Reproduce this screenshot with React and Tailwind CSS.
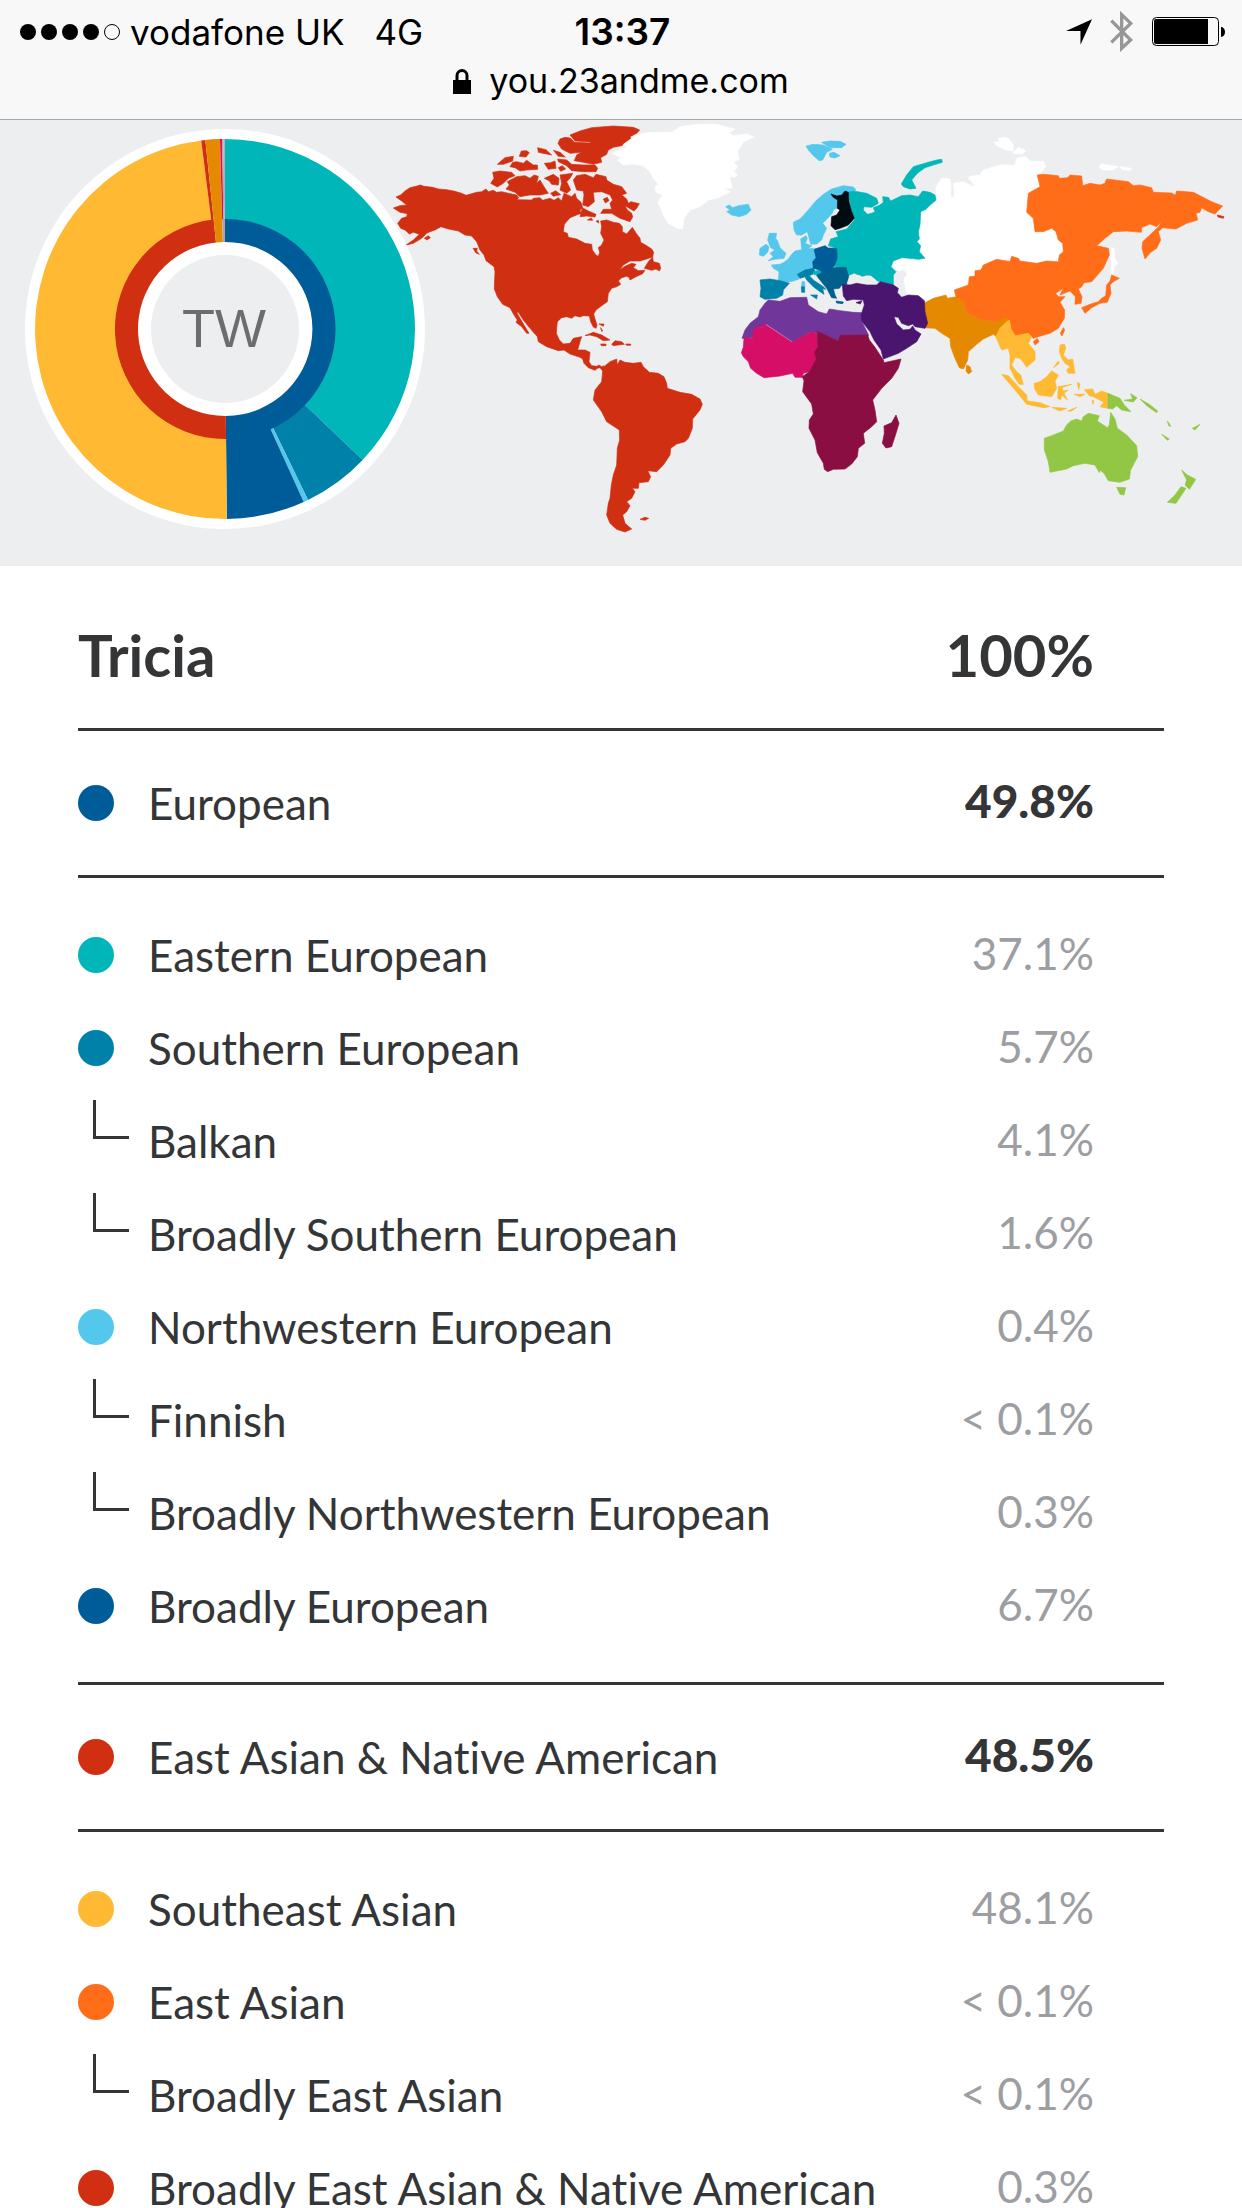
import { Fragment } from 'react';

const COLORS = {
  navy: '#005b99',
  teal: '#00b6b8',
  cerulean: '#0081a9',
  sky: '#54c7ec',
  balkan: '#005f8c',
  red: '#d12f12',
  yellow: '#ffb932',
  orange: '#ff6d19',
  amber: '#e58a00',
  green: '#91c745',
  purple: '#71369a',
  indigo: '#4a156f',
  magenta: '#d70e68',
  maroon: '#8b0e42',
};

const GROUPS = [
  {
    name: 'European',
    value: '49.8%',
    dot: 'bg-[#005b99]',
    rows: [
      { name: 'Eastern European', value: '37.1%', dot: 'bg-[#00b6b8]' },
      { name: 'Southern European', value: '5.7%', dot: 'bg-[#0081a9]' },
      { name: 'Balkan', value: '4.1%' },
      { name: 'Broadly Southern European', value: '1.6%' },
      { name: 'Northwestern European', value: '0.4%', dot: 'bg-[#54c7ec]' },
      { name: 'Finnish', value: '< 0.1%' },
      { name: 'Broadly Northwestern European', value: '0.3%' },
      { name: 'Broadly European', value: '6.7%', dot: 'bg-[#005b99]' },
    ],
  },
  {
    name: 'East Asian & Native American',
    value: '48.5%',
    dot: 'bg-[#d12f12]',
    rows: [
      { name: 'Southeast Asian', value: '48.1%', dot: 'bg-[#ffb932]' },
      { name: 'East Asian', value: '< 0.1%', dot: 'bg-[#ff6d19]' },
      { name: 'Broadly East Asian', value: '< 0.1%' },
      { name: 'Broadly East Asian & Native American', value: '0.3%', dot: 'bg-[#d12f12]' },
    ],
  },
];

// [from, to] in percent of the full turn, clockwise from the top
const OUTER_SLICES = [
  { from: 0, to: 37.1, color: COLORS.teal },
  { from: 37.1, to: 42.8, color: COLORS.cerulean },
  { from: 42.8, to: 43.2, color: COLORS.sky },
  { from: 43.2, to: 49.85, color: COLORS.navy },
  { from: 49.85, to: 98, color: COLORS.yellow },
  { from: 98, to: 98.35, color: COLORS.red },
  { from: 98.35, to: 99.58, color: COLORS.amber },
  { from: 99.58, to: 99.76, color: COLORS.magenta },
  { from: 99.76, to: 99.88, color: '#b9a38c' },
  { from: 99.88, to: 100, color: '#b7a9c4' },
];

const INNER_SLICES = [
  { from: 0, to: 49.85, color: COLORS.navy },
  { from: 49.85, to: 98.35, color: COLORS.red },
  { from: 98.35, to: 99.6, color: COLORS.amber },
  { from: 99.6, to: 100, color: '#b7a0a4' },
];

// Land shapes, grouped by the corner they are measured from
const LAND = [
  {
    at: 'translate(1140 345)',
    shapes: [
      {
        color: COLORS.red,
        d: [
          'M48 246L62 240 75 228 90 218 108 214 121 210 132 214 158 217 175 222 200 224 225 229 245 235 258 241 275 236 290 232 305 230 318 222 325 230 340 226 350 232 365 230 385 235 410 240 416 247 412 254 455 255 460 250 480 248 488 256 510 250 522 256 535 248 545 258 552 235 575 245 585 235 590 250 603 262 608 278 600 285 603 295 590 300 570 308 553 328 550 350 562 355 565 367 590 372 615 385 635 388 637 405 648 420 655 424 659 412 655 398 665 390 672 375 662 355 665 335 662 318 680 315 700 322 718 325 727 335 727 350 740 357 757 337 770 357 780 370 782 382 800 392 815 402 821 412 818 425 800 432 780 438 750 438 730 450 718 465 735 454 755 445 768 448 760 458 775 467 795 466 788 476 768 485 750 495 747 487 740 484 725 488 715 498 722 508 710 515 695 520 685 535 682 560 665 572 648 585 641 597 645 612 651 630 648 640 640 636 632 620 628 603 610 602 600 606 585 602 575 610 560 605 545 608 532 620 530 640 529 655 538 675 550 687 570 685 580 670 605 665 600 680 593 705 615 705 630 712 627 740 635 752 650 754 657 750 665 755 672 752 668 768 660 758 652 760 645 766 625 758 612 745 608 732 600 727 570 717 552 705 535 707 500 695 475 680 472 665 450 640 430 615 415 592 410 592 420 610 432 630 447 655 440 655 425 635 408 622 412 615 402 600 390 578 368 568 352 545 343 522 344 490 345 470 342 455 318 437 312 420 300 405 290 380 275 363 255 360 235 348 205 342 183 335 165 345 150 350 140 355 125 370 100 385 78 390 100 375 118 358 100 352 88 357 75 345 62 340 53 325 65 310 80 305 82 296 60 292 40 279 60 272 80 270 65 258Z',
          'M793 460L805 440 818 425 820 440 838 445 842 460 838 468 828 462 815 466Z',
          'M279 400L292 400 290 408 298 418 288 414ZM325 432L342 440 356 455 350 455Z',
          'M570 60L600 48 635 38 700 33 760 37 779 45 770 55 750 65 752 70 725 92 700 97 685 105 680 118 662 128 665 142 640 148 610 142 583 137 590 120 605 112 570 115 545 102 534 85 540 72 555 67 570 69 584 82 630 84 632 81 585 78Z',
          'M533 132L560 135 575 148 610 150 645 150 653 160 648 170 610 170 575 167 560 152 535 140Z',
          'M338 172L360 168 395 172 405 182 385 190 370 205 352 216 332 205 342 190Z',
          'M382 200L410 185 435 182 450 190 462 180 475 184 470 205 480 195 492 215 505 235 480 240 450 240 420 245 405 232 378 222 388 210Z',
          'M352 148L375 128 400 124 398 138 370 148Z',
          'M390 155L398 142 410 140 430 145 440 136 460 150 472 150 473 163 440 165 420 168 405 158Z',
          'M418 124L424 108 440 107 448 113 438 126ZM473 98L498 104 515 120 495 116 475 112ZM520 106L540 112 556 126 535 124ZM493 145L512 143 525 138 528 160 505 163ZM535 158L547 152 557 162 542 169Z',
          'M493 190L520 178 537 190 535 210 515 208 508 198ZM540 180L578 175 570 190 560 200 572 225 560 235 540 225 545 205ZM512 235L527 227 542 239 520 244Z',
          'M580 195L590 182 615 178 640 188 648 178 678 185 680 195 700 208 725 215 740 235 725 240 740 252 745 265 753 260 778 266 770 280 762 288 735 272 742 285 755 295 758 306 750 320 720 310 695 295 662 295 670 283 695 283 690 265 698 255 690 240 665 230 640 232 643 260 625 275 608 270 612 240 610 228 590 225Z',
          'M670 252L682 247 687 257 676 264ZM607 278L625 288 648 298 645 306 620 303 600 305ZM622 315L634 309 638 316ZM648 319L655 316 656 324Z',
          'M615 662L640 652 665 660 690 675 670 677 650 665 630 660ZM695 688L705 677 725 680 733 688 715 690 700 692ZM662 687H678V692H664ZM737 687H752V691H740ZM657 627L672 627 670 634ZM662 638L668 648 665 649Z',
          'M133 370L145 362 151 368 141 375Z',
          'M668 768L672 755 690 740 710 732 712 750 720 735 735 742 760 745 783 742 790 755 808 772 835 775 852 785 860 805 862 820 900 832 935 838 960 852 967 868 960 885 938 912 937 940 925 970 915 980 890 987 872 1000 870 1020 850 1050 830 1070 803 1067 812 1085 805 1100 777 1103 775 1120 757 1120 765 1130 755 1150 740 1160 750 1172 740 1190 728 1200 735 1225 755 1242 735 1251 710 1243 690 1225 680 1200 685 1165 690 1150 694 1110 700 1080 710 1050 712 1000 719 975 718 945 680 920 665 890 640 855 645 825 665 800Z',
          'M780 1213L795 1207 806 1210 795 1216Z',
        ].join(''),
      },
    ],
  },
  {
    at: 'translate(1800 345)',
    shapes: [
      {
        color: '#ffffff',
        d: 'M36 115L60 105 80 97 70 88 90 75 110 60 140 53 185 52 215 52 240 35 290 28 350 28 405 43 385 52 400 62 440 57 463 66 430 80 412 110 418 133 400 140 412 155 402 170 411 178 408 186 388 185 397 218 370 222 392 230 350 250 325 255 300 275 270 285 252 310 247 342 228 338 205 325 190 300 180 275 173 262 188 240 168 232 165 215 175 208 160 190 150 170 130 152 100 147 70 150 52 135 65 128Z',
      },
      {
        color: COLORS.sky,
        d: 'M377 275L388 270 398 278 415 272 430 270 445 268 449 278 453 285 440 298 418 305 395 300 380 290 390 285Z',
      },
    ],
  },
  {
    at: 'translate(2700 345)',
    shapes: [
      {
        color: '#ffffff',
        d: [
          'M-27 445L0 428 30 432 50 425 58 410 60 392 50 370 55 330 58 290 90 275 108 262 108 215 125 190 150 192 153 215 152 245 160 250 163 232 160 205 190 200 220 215 222 208 205 190 210 184 240 180 250 165 300 150 345 150 350 130 375 124 390 138 430 140 437 155 425 170 405 185 430 215 390 235 385 290 410 350 455 335 495 390 490 415 475 445 410 450 335 430 290 440 245 470 210 500 165 535 175 550 142 552 138 542 100 550 75 562 45 542 20 545 15 510 5 495 0 480 12 468 -15 465 -25 460Z',
          'M283 82L298 80 295 70 310 67 326 70 340 90 340 108 318 105 290 92ZM338 115L355 97 378 108 365 117ZM598 155L604 146 655 155 640 165 605 165ZM660 155L695 160 690 167 665 163ZM125 262L155 252 158 262 140 269Z',
          'M635 398L642 400 645 430 653 445 642 455 640 475 632 475 635 440 630 415Z',
        ].join(''),
      },
      {
        color: COLORS.amber,
        d: 'M72 565L100 550 138 540 142 550 170 545 192 560 200 590 240 612 290 620 318 606 332 612 300 640 290 665 280 658 250 672 230 688 205 710 203 735 190 762 178 758 165 730 152 695 150 670 125 655 105 640 72 638 80 620 70 600ZM200 750L210 755 215 770 205 777 198 768Z',
      },
      {
        color: COLORS.orange,
        d: [
          'M412 180L430 178 475 182 478 190 503 188 510 180 545 183 548 212 570 205 600 210 615 205 620 192 685 200 700 212 720 210 755 218 760 232 815 234 826 241 830 228 880 232 935 260 968 273 945 297 925 290 905 278 900 292 888 295 893 315 860 325 828 342 788 338 775 350 782 375 770 400 752 412 735 432 726 400 728 380 760 350 776 335 785 318 770 335 750 327 725 338 724 352 680 348 640 350 615 370 590 392 625 400 628 420 610 460 575 500 552 503 545 515 535 522 546 545 543 565 525 568 526 545 510 528 480 540 490 520 467 535 475 545 495 545 480 562 494 585 493 610 475 640 450 655 415 665 400 670 385 655 345 663 330 640 328 615 318 606 290 620 240 612 200 590 192 560 168 545 163 525 205 510 208 485 225 483 225 467 243 465 250 450 290 433 330 440 335 424 355 430 360 438 410 445 440 438 475 440 478 420 490 410 488 385 475 375 468 350 455 340 430 350 405 350 400 310 380 292 385 235 420 215Z',
          'M481 655L490 638 494 645 486 663ZM400 680L412 670 417 680 405 690Z',
          'M545 578L570 568 595 560 605 550 617 542 620 510 630 498 635 480 658 490 640 500 630 510 633 535 622 562 600 565 575 578 555 595Z',
        ].join(''),
      },
      { color: COLORS.red, d: 'M952 300L972 305 970 310 954 306Z' },
      {
        color: COLORS.yellow,
        d: [
          'M287 665L300 640 318 622 328 615 333 640 345 662 385 655 395 665 385 685 405 710 405 735 380 757 372 745 360 730 345 728 335 750 350 770 362 780 370 808 358 808 345 790 330 760 330 720 325 700 305 705Z',
          'M305 778L325 782 355 815 380 840 382 858 420 863 450 875 430 878 380 868 345 825ZM455 877L500 880 480 888ZM503 888L530 877 515 888Z',
          'M403 805L420 800 440 785 455 768 475 780 465 800 470 820 455 845 415 840 403 820Z',
          'M475 815L515 808 485 818 490 828 505 825 492 835 502 855 485 840 482 855 473 850Z',
          'M480 690L493 687 497 700 490 720 505 735 518 732 525 775 505 775 500 765 510 755 495 745 485 730 478 710ZM460 758L475 738 478 745ZM532 802L540 807 536 824ZM522 838L555 838 540 845Z',
          'M553 824L578 822 585 838 605 828 624 835 624 880 600 875 612 862 580 845 568 842ZM576 855L582 858 579 868Z',
        ].join(''),
      },
      {
        color: COLORS.green,
        d: [
          'M624 835L660 850 673 870 693 890 665 885 650 872 638 882 624 880ZM672 856L698 852 692 836 711 848 700 861ZM720 852L748 868 773 888 770 893 740 872ZM802 918L813 934 806 932ZM785 958L808 972 802 976ZM877 940L900 928 885 945Z',
          'M433 970L455 962 490 948 500 930 512 918 530 912 545 918 550 905 565 895 598 902 592 918 622 938 628 930 632 892 645 912 652 940 680 960 710 992 713 1025 692 1065 688 1092 660 1102 625 1097 612 1075 600 1065 598 1073 585 1050 555 1045 520 1052 500 1062 450 1072 445 1040 433 1005Z',
          'M650 1117L677 1118 672 1140 660 1138Z',
          'M845 1065L862 1080 887 1093 878 1108 868 1123 855 1110 860 1095ZM843 1115L858 1120 828 1165 802 1162 825 1140Z',
        ].join(''),
      },
    ],
  },
  {
    at: 'translate(2040 345)',
    shapes: [
      {
        color: COLORS.sky,
        d: [
          'M378 93L400 88 430 90 457 103 440 112 428 135 418 137 400 122 385 105ZM425 82L450 78 480 79 498 88 485 98 450 98ZM448 115L462 112 480 122 465 129 450 126Z',
          'M340 322L360 312 385 285 405 260 430 238 455 222 490 212 520 216 528 225 510 232 500 230 488 235 475 243 472 255 475 277 460 285 457 295 435 318 428 325 440 340 430 360 425 375 410 387 392 388 388 372 382 350 365 360 350 360 342 345Z',
          'M362 372L378 362 382 370 376 385 395 393 385 400 378 405 365 402Z',
          'M268 355L290 355 287 370 293 378 300 398 318 415 312 430 285 433 265 437 280 425 270 415 285 405 272 398 263 375ZM240 400L258 388 267 395 263 412 250 424 238 420Z',
          'M274 450L300 448 312 442 325 432 335 418 345 408 370 403 400 400 408 428 398 440 402 462 380 468 355 475 358 492 340 498 315 503 295 497 297 470 280 460ZM366 500H374V514H365Z',
        ].join(''),
      },
      {
        color: COLORS.teal,
        d: [
          'M505 232L520 228 560 235 590 250 595 265 575 277 552 275 550 285 562 298 575 295 585 290 580 278 600 270 610 262 608 245 625 247 632 258 665 242 690 240 715 245 728 228 750 232 765 240 768 255 750 270 738 283 722 290 720 330 715 350 718 372 711 380 722 392 718 410 735 430 715 433 690 430 665 428 640 438 633 455 648 470 640 480 640 500 640 515 615 505 590 497 570 480 550 487 540 480 515 478 503 482 498 457 470 460 462 450 472 430 470 400 445 392 452 372 475 365 468 350 500 342 525 312 515 290Z',
          'M550 475L568 469 568 477 553 483Z',
          'M664 207L680 180 700 155 740 143 770 135 785 133 787 142 760 150 735 158 712 175 695 195 708 220 690 222 670 215Z',
        ].join(''),
      },
      {
        color: COLORS.cerulean,
        d: 'M240 495L270 492 300 497 328 505 310 525 308 540 290 550 255 553 240 545 243 520ZM352 478L375 465 400 460 405 468 398 478 388 482 400 495 430 515 437 523 428 521 432 538 420 530 400 515 380 495 375 485 360 490ZM392 540L412 540 410 552ZM364 515H374V532H365Z',
      },
      {
        color: COLORS.balkan,
        d: 'M412 474L425 462 450 462 460 458 498 457 503 475 508 490 500 508 485 510 478 520 460 522 465 540 470 550 455 548 440 520 420 495 410 482ZM468 558L490 561 488 566 470 564Z',
      },
      { color: COLORS.teal, d: 'M400 470L422 464 422 474 402 480Z' },
      {
        color: COLORS.navy,
        d: 'M402 403L435 392 445 399 470 400 472 430 462 455 450 465 425 467 400 460 398 440 408 428Z',
      },
      {
        color: '#020a12',
        d: 'M453 237L470 243 485 240 495 228 505 232 507 260 515 290 523 310 505 330 480 340 465 344 453 332 455 305 470 300 480 285 472 280 473 255 460 247Z',
      },
      // Caspian and Black Sea
      { color: '#edeef0', d: 'M508 485L522 476 545 487 560 482 575 485 590 498 593 508 575 512 545 505 510 512 502 505ZM652 472L672 465 680 480 670 490 672 510 682 545 660 548 655 520 645 510 652 495Z' },
    ],
  },
  {
    at: 'translate(2040 780)',
    shapes: [
      {
        color: COLORS.purple,
        d: 'M186 235L195 210 210 190 235 170 240 150 255 130 265 120 300 124 330 113 380 112 385 135 415 155 440 162 448 147 480 152 520 157 545 158 545 183 566 226 480 227 475 243 430 222 390 217 340 247 258 192 248 200 228 205 218 233Z',
      },
      {
        color: COLORS.magenta,
        d: 'M192 233L218 235 220 212 230 200 248 202 250 190 336 247 395 215 412 222 413 262 403 275 408 298 388 335 370 340 367 352 345 352 338 340 300 348 252 353 230 340 212 325 205 305 190 290 184 278 190 262Z',
      },
      {
        color: COLORS.maroon,
        d: 'M412 215L430 222 475 243 480 226 563 225 568 240 585 262 600 285 610 300 612 308 663 297 655 325 635 355 605 385 578 420 585 450 590 485 575 500 550 520 554 550 535 565 532 590 515 612 495 627 460 628 443 635 433 628 430 610 412 578 405 540 387 505 388 480 400 462 395 432 368 395 372 362 367 350 388 335 408 298 403 275 413 262ZM648 465L657 490 648 520 635 560 618 564 607 550 613 520 612 498 635 488Z',
      },
      {
        color: COLORS.indigo,
        d: 'M487 73L510 75 530 70 560 75 590 75 600 65 640 75 655 85 652 98 665 112 685 105 715 107 733 122 735 155 743 190 735 205 705 200 698 192 685 197 665 190 655 172 642 170 650 192 670 210 690 208 698 198 705 210 723 222 710 245 680 265 655 280 610 297 603 270 582 240 570 215 545 183 543 165 553 135 550 120 520 118 500 122 490 108ZM528 128L546 122 541 132Z',
      },
    ],
  },
];

function slicePath({ from, to }, outer, inner) {
  const point = (pct, r) => {
    const a = (pct / 100) * Math.PI * 2;
    return `${(Math.sin(a) * r).toFixed(2)} ${(-Math.cos(a) * r).toFixed(2)}`;
  };
  const large = to - from > 50 ? 1 : 0;
  return `M${point(from, outer)}A${outer} ${outer} 0 ${large} 1 ${point(to, outer)}L${point(to, inner)}A${inner} ${inner} 0 ${large} 0 ${point(from, inner)}Z`;
}

function StatusBar() {
  return (
    <header className="border-b border-[#a5a6a9] bg-[#f8f8f8] pb-5 font-['Inter',sans-serif] text-[34px] leading-[36px] text-black">
      <div className="grid h-[63px] grid-cols-[1fr_auto_1fr] items-center pr-[17px] pl-5">
        <div className="flex items-center text-[35px]">
          <div className="mr-2.5 flex gap-[5px]">
            <span className="size-4 rounded-full bg-black" />
            <span className="size-4 rounded-full bg-black" />
            <span className="size-4 rounded-full bg-black" />
            <span className="size-4 rounded-full bg-black" />
            <span className="size-4 rounded-full border border-black" />
          </div>
          <span>vodafone UK</span>
          <span className="ml-[30px]">4G</span>
        </div>
        <span className="text-[37px] font-semibold">13:37</span>
        <div className="flex items-center justify-end">
          <svg className="h-[26px] w-[26px]" viewBox="0 0 79 78" aria-hidden="true">
            <path d="M79 0L44 78V36H0Z" />
          </svg>
          <svg className="ml-[18px] h-[41px] w-[23px]" viewBox="0 0 69 123" fill="none" stroke="#979797" strokeWidth="10" aria-hidden="true">
            <path d="M4 29L62 87 35 112V11L62 37 4 94" />
          </svg>
          <svg className="ml-[19px] h-[29px] w-[73px]" viewBox="0 0 73 29" aria-hidden="true">
            <rect x="0.5" y="0.5" width="66" height="28" rx="4" fill="none" stroke="#000" />
            <path d="M4 2H56V27H4a2 2 0 0 1-2-2V4a2 2 0 0 1 2-2Z" />
            <path d="M69 10a4 5 0 0 1 0 10Z" />
          </svg>
        </div>
      </div>
      <div className="flex h-9 items-center justify-center">
        <svg className="mr-[18px] h-[25px] w-[18px]" viewBox="0 0 18 25" aria-hidden="true">
          <path d="M0 11H18V25H0Z" />
          <path d="M4 12V6.500a5 5 0 0 1 10 0V12" fill="none" stroke="#000" strokeWidth="3" />
        </svg>
        <span>you.23andme.com</span>
      </div>
    </header>
  );
}

function Donut() {
  return (
    <svg className="relative z-10 w-[400px] shrink-0" viewBox="-200 -200 400 400" role="img" aria-label="Ancestry composition">
      <circle r="200" fill="#fff" />
      {OUTER_SLICES.map((s) => (
        <path key={s.from} d={slicePath(s, 190, 109)} fill={s.color} />
      ))}
      {INNER_SLICES.map((s) => (
        <path key={s.from} d={slicePath(s, 110, 87)} fill={s.color} />
      ))}
      <circle r="74" fill="#edeef0" />
      <text x="-1" y="18" textAnchor="middle" className="fill-[#6d6d6d] font-['Liberation_Sans',sans-serif] text-[54px]">
        TW
      </text>
    </svg>
  );
}

function WorldMap() {
  return (
    <svg className="-ml-[35px] min-w-0 flex-1 overflow-visible" viewBox="1170 387 2520 1200" role="img" aria-label="World map">
      {LAND.map((region) => (
        <g key={region.at} transform={region.at}>
          {region.shapes.map((shape) => (
            <path key={shape.d} d={shape.d} fill={shape.color} stroke={shape.color} strokeWidth="2" strokeLinejoin="round" />
          ))}
        </g>
      ))}
    </svg>
  );
}

function Row({ row }) {
  return (
    <tr className="h-[93px]">
      <td className={row.dot ? 'p-0' : 'p-0 pt-1.5 align-top'}>
        {row.dot ? (
          <span className={`block size-9 rounded-full ${row.dot}`} />
        ) : (
          <span className="ml-[15px] block h-[39px] w-9 border-b-[3px] border-l-[3px] border-[#343537]" />
        )}
      </td>
      <th scope="row" className="p-0 text-left font-normal">{row.name}</th>
      <td className="p-0 pr-[70px] pb-1 text-right text-[#9d9ea2]">{row.value}</td>
    </tr>
  );
}

export default function App() {
  return (
    <div className="h-screen overflow-hidden bg-white">
      <StatusBar />

      <div className="flex items-start bg-[#edeef0] pt-[9px] pr-3 pb-[37px] pl-[25px]">
        <Donut />
        <WorldMap />
      </div>

      <main className="px-[78px] font-['Lato',sans-serif] text-[44px] leading-[50px] text-[#343537] [font-variant-ligatures:none]">
        <table className="w-full border-separate border-spacing-0">
          <thead>
            <tr className="h-[162px] text-[58px] font-black">
              <th scope="col" colSpan={2} className="p-0 pt-4 text-left">Tricia</th>
              <th scope="col" className="p-0 pt-4 pr-[70px] text-right">100%</th>
            </tr>
          </thead>
          <tbody>
            {GROUPS.map((group) => (
              <Fragment key={group.name}>
                <tr className="h-[150px]">
                  <td className="w-[70px] border-y-[3px] border-[#343537] p-0">
                    <span className={`block size-9 rounded-full ${group.dot}`} />
                  </td>
                  <th scope="rowgroup" className="border-y-[3px] border-[#343537] p-0 text-left font-normal">
                    {group.name}
                  </th>
                  <td className="border-y-[3px] border-[#343537] p-0 pr-[70px] pb-1 text-right text-[46px] font-black">{group.value}</td>
                </tr>
                <tr aria-hidden="true" className="h-[30px]">
                  <td colSpan={3} className="p-0" />
                </tr>
                {group.rows.map((row) => (
                  <Row key={row.name} row={row} />
                ))}
                <tr aria-hidden="true" className="h-[30px]">
                  <td colSpan={3} className="p-0" />
                </tr>
              </Fragment>
            ))}
          </tbody>
        </table>
      </main>
    </div>
  );
}
